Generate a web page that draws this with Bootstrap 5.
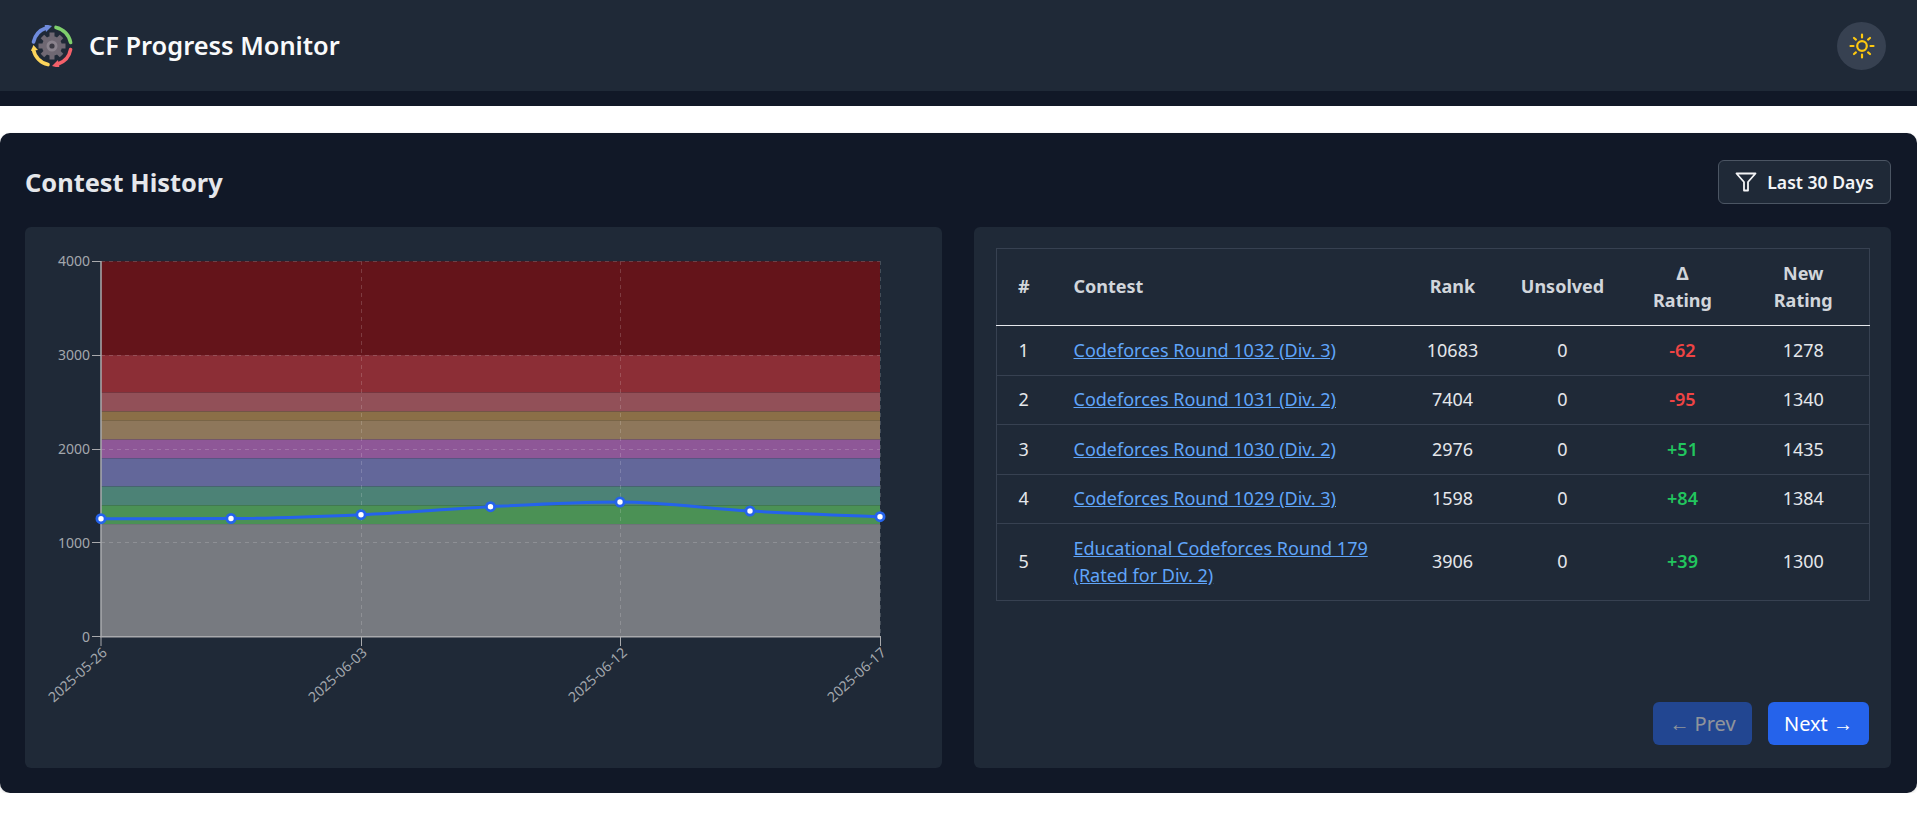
<!DOCTYPE html>
<html lang="en">
<head>
    <meta charset="UTF-8">
    <meta name="viewport" content="width=device-width, initial-scale=1.0">
    <title>CF Progress Monitor</title>
    <link rel="stylesheet" href="https://cdn.jsdelivr.net/npm/bootstrap@5.3.0/dist/css/bootstrap.min.css">
    <style>
        body { background: #fff; font-family: "Noto Sans", "Open Sans", sans-serif; overflow: hidden; }
        .top-bar { background: #1f2937; height: 91px; padding: 0 31px; }
        .top-strip { background: #111827; height: 15px; margin-bottom: 27px; }
        .app-title { color: #f9fafb; font-size: 25.4px; font-weight: 600; margin: 0; }
        .theme-btn { width: 49px; height: 48px; background: #374151; border: 0; padding: 0; }
        .history-panel { background: #111827; height: 660px; padding: 27px 26px 25px 25px; border-radius: 10px; box-shadow: 0 1px 3px rgba(0,0,0,.15); }
        .panel-title { color: #e5e7eb; font-size: 25.4px; font-weight: 700; margin: 0; }
        .range-btn { height: 44px; width: 173px; background: #1f2937; border: 1px solid #4b5563; border-radius: 6px; color: #f3f4f6; font-size: 17.6px; font-weight: 600; padding: 0; gap: 10px; }
        .panel-head { margin-bottom: 23px; }
        .panel-body-row { gap: 32px; height: 541px; }
        .box-dark { background: #1f2937; border-radius: 6px; width: 917px; }
        .table-box { padding: 21px 22px 23px; }
        .history-table { table-layout: fixed; width: 873px; margin: 0; --bs-table-bg: transparent; --bs-table-color: #e5e7eb; font-size: 18px; line-height: 27.5px; border: 1px solid #374151; }
        .history-table th, .history-table td { padding: 10.5px 8px; text-align: center; vertical-align: middle; border-width: 0; }
        .history-table td { border-bottom: 1px solid #374151; }
        .history-table thead th { color: #d1d5db; font-weight: 700; border-bottom: 1px solid #e5e7eb; }
        .history-table .cell-contest { text-align: left; padding-left: 23px; padding-right: 16px; }
        .history-table a { color: #60a5fa; }
        .c-num { width: 54px; }
        .c-contest { width: 357px; }
        .c-rank { width: 90px; }
        .c-unsolved { width: 130px; }
        .c-delta { width: 110px; }
        .c-new { width: 132px; }
        .delta-down { color: #ef4444 !important; font-weight: 600; }
        .delta-up { color: #22c55e !important; font-weight: 600; }
        .pager-btn { height: 43px; background: #2563eb; border: 0; border-radius: 6px; color: #fff; font-size: 20px; padding: 0; }
        .pager-btn:disabled { background: #2563eb; color: #fff; opacity: .5; }
        .pager-prev { width: 99px; }
        .pager-next { width: 101px; }
        .pager { gap: 16px; }
        .axis-label { fill: #a3a7ad; font-size: 14px; font-family: "Noto Sans", sans-serif; }
    </style>
</head>
<body>
    <!-- Header -->
    <header class="top-bar d-flex align-items-center justify-content-between">
        <div class="d-flex align-items-center gap-3">
            <svg width="42" height="42" viewBox="0 0 42 42">
                <g fill="none" stroke-width="3.6" stroke-linecap="round">
                    <path d="M2.5 17 A19 19 0 0 1 15 3" stroke="#6f8bdc"/>
                    <path d="M25 2.4 A19 19 0 0 1 39.6 17.5" stroke="#7fd06c"/>
                    <path d="M39.6 24.5 A19 19 0 0 1 27 39" stroke="#f4606a"/>
                    <path d="M17 39.6 A19 19 0 0 1 2.4 24.5" stroke="#fbd45b"/>
                </g>
                <path d="M21 1 L13.5 -1 L15 7z" fill="#6f8bdc"/>
                <path d="M21 41 L28.5 43 L27 35z" fill="#f4606a"/>
                <path d="M2.4 18 L0 24 L7 23z" fill="#fbd45b" transform="translate(0 2)"/>
                <g fill="#6f6873">
                    <circle cx="21" cy="21" r="10"/>
                    <rect x="18.5" y="7.5" width="5" height="27"/>
                    <rect x="7.5" y="18.5" width="27" height="5"/>
                    <rect x="18.5" y="7.5" width="5" height="27" transform="rotate(45 21 21)"/>
                    <rect x="7.5" y="18.5" width="27" height="5" transform="rotate(45 21 21)"/>
                </g>
                <circle cx="21" cy="21" r="5.5" fill="#8a838d"/>
                <circle cx="21" cy="21" r="2.6" fill="#3b3a44"/>
            </svg>
            <h1 class="app-title">CF Progress Monitor</h1>
        </div>
        <button class="theme-btn rounded-circle d-flex align-items-center justify-content-center" type="button" aria-label="Toggle theme">
            <svg width="26" height="26" viewBox="0 0 26 26" fill="none" stroke="#fdc80f" stroke-width="2.2" stroke-linecap="round">
                <circle cx="13" cy="13" r="4.8"/>
                <path d="M13 1.5v3M13 21.5v3M1.5 13h3M21.5 13h3M5 5l1.9 1.6M19.1 19.4L21 21M5 21l1.9-1.6M19.1 6.6L21 5"/>
            </svg>
        </button>
    </header>
    <div class="top-strip"></div>

    <main class="history-panel">
        <div class="panel-head d-flex align-items-center justify-content-between">
            <h2 class="panel-title">Contest History</h2>
            <button class="range-btn d-flex align-items-center justify-content-center" type="button">
                <svg width="22" height="22" viewBox="0 0 22 22" fill="none" stroke="#f3f4f6" stroke-width="1.8" stroke-linejoin="round"><path d="M1.5 2.5h19l-7.5 8.5v8.5h-4v-8.5z"/></svg>
                Last 30 Days
            </button>
        </div>

        <div class="panel-body-row d-flex">
            <!-- Rating chart -->
            <div class="box-dark">
                <svg class="d-block" width="917" height="541" viewBox="25 227 917 541">
                    <rect x="101" y="261.3" width="779" height="93.8" fill="#64141a"/>
                    <rect x="101" y="355.1" width="779" height="37.6" fill="#8c2e36"/>
                    <rect x="101" y="392.7" width="779" height="18.8" fill="#925058"/>
                    <rect x="101" y="411.5" width="779" height="9.3" fill="#8b6f47"/>
                    <rect x="101" y="420.8" width="779" height="18.8" fill="#8e775b"/>
                    <rect x="101" y="439.6" width="779" height="18.8" fill="#8e5797"/>
                    <rect x="101" y="458.4" width="779" height="28.1" fill="#63679a"/>
                    <rect x="101" y="486.5" width="779" height="18.8" fill="#4c8276"/>
                    <rect x="101" y="505.3" width="779" height="18.8" fill="#4b9155"/>
                    <rect x="101" y="524.1" width="779" height="112.6" fill="#777a80"/>

                    <g stroke="#fff" stroke-opacity=".17" stroke-dasharray="4 4">
                        <path d="M101 261.5H880M101 355.5H880M101 449.5H880M101 542.5H880"/>
                        <path d="M361.5 261V637M620.5 261V637M880.5 261V637"/>
                    </g>

                    <g stroke="#a9aaad" fill="none">
                        <path stroke-width="1.5" d="M101 261V637M100 636.7H881"/>
                        <path d="M92 261.5h9M92 355.5h9M92 449.5h9M92 542.5h9M92 636.5h9"/>
                        <path d="M101 637v9M361.5 637v9M620.5 637v9M880.5 637v9"/>
                    </g>

                    <g class="axis-label" text-anchor="end">
                        <text x="90" y="266">4000</text>
                        <text x="90" y="360">3000</text>
                        <text x="90" y="454">2000</text>
                        <text x="90" y="548">1000</text>
                        <text x="90" y="642">0</text>
                        <text transform="translate(108 654) rotate(-42)">2025-05-26</text>
                        <text transform="translate(368 654) rotate(-42)">2025-06-03</text>
                        <text transform="translate(628 654) rotate(-42)">2025-06-12</text>
                        <text transform="translate(887 654) rotate(-42)">2025-06-17</text>
                    </g>

                    <path d="M101 518.7C144 518.7 188 518.6 231 518.5S318 516.7 361 514.7S447 509 490.5 506.7S577 502 620 502S707 508.6 750 511S837 515 880 516.7" fill="none" stroke="#2563eb" stroke-width="3"/>
                    <g fill="#fff" stroke="#2563eb" stroke-width="2.8">
                        <circle cx="101" cy="518.7" r="4.1"/>
                        <circle cx="231" cy="518.5" r="4.1"/>
                        <circle cx="361" cy="514.7" r="4.1"/>
                        <circle cx="490.5" cy="506.7" r="4.1"/>
                        <circle cx="620" cy="502" r="4.1"/>
                        <circle cx="750" cy="511" r="4.1"/>
                        <circle cx="880" cy="516.7" r="4.1"/>
                    </g>
                </svg>
            </div>

            <!-- Contest table -->
            <div class="box-dark table-box d-flex flex-column justify-content-between">
                <table class="table history-table">
                    <colgroup>
                        <col class="c-num"><col class="c-contest"><col class="c-rank"><col class="c-unsolved"><col class="c-delta"><col class="c-new">
                    </colgroup>
                    <thead>
                        <tr>
                            <th>#</th>
                            <th class="cell-contest">Contest</th>
                            <th>Rank</th>
                            <th>Unsolved</th>
                            <th>Δ<br>Rating</th>
                            <th>New<br>Rating</th>
                        </tr>
                    </thead>
                    <tbody>
                        <tr>
                            <td>1</td>
                            <td class="cell-contest"><a href="#">Codeforces Round 1032 (Div. 3)</a></td>
                            <td>10683</td><td>0</td><td class="delta-down">-62</td><td>1278</td>
                        </tr>
                        <tr>
                            <td>2</td>
                            <td class="cell-contest"><a href="#">Codeforces Round 1031 (Div. 2)</a></td>
                            <td>7404</td><td>0</td><td class="delta-down">-95</td><td>1340</td>
                        </tr>
                        <tr>
                            <td>3</td>
                            <td class="cell-contest"><a href="#">Codeforces Round 1030 (Div. 2)</a></td>
                            <td>2976</td><td>0</td><td class="delta-up">+51</td><td>1435</td>
                        </tr>
                        <tr>
                            <td>4</td>
                            <td class="cell-contest"><a href="#">Codeforces Round 1029 (Div. 3)</a></td>
                            <td>1598</td><td>0</td><td class="delta-up">+84</td><td>1384</td>
                        </tr>
                        <tr>
                            <td>5</td>
                            <td class="cell-contest"><a href="#">Educational Codeforces Round 179 (Rated for Div. 2)</a></td>
                            <td>3906</td><td>0</td><td class="delta-up">+39</td><td>1300</td>
                        </tr>
                    </tbody>
                </table>
                <div class="pager d-flex justify-content-end">
                    <button class="btn pager-btn pager-prev" type="button" disabled>← Prev</button>
                    <button class="btn pager-btn pager-next" type="button">Next →</button>
                </div>
            </div>
        </div>
    </main>

    <script src="https://cdn.jsdelivr.net/npm/bootstrap@5.3.0/dist/js/bootstrap.bundle.min.js"></script>
</body>
</html>
